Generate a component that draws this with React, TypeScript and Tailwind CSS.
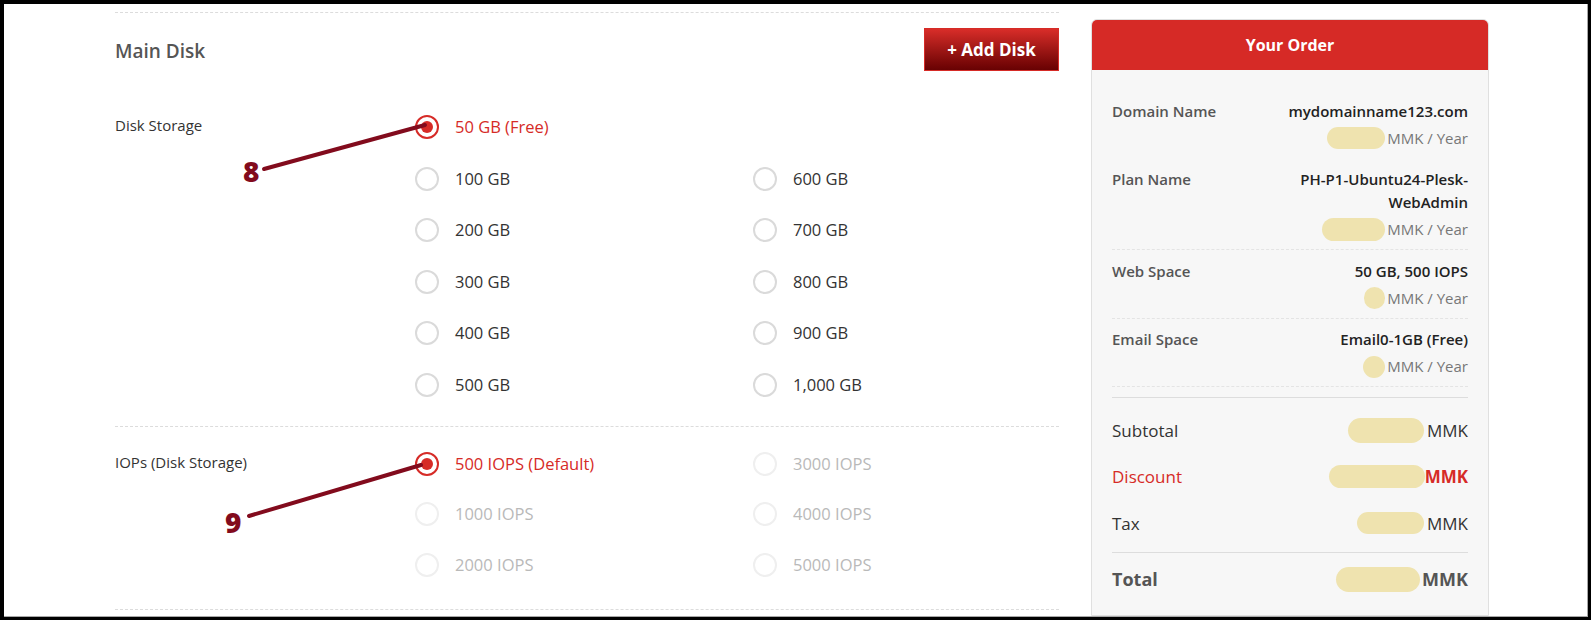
import React from "react";

type Opt = { label: string; state: "checked" | "idle" | "disabled" };

function Radio({ state }: { state: Opt["state"] }) {
  if (state === "checked") {
    return (
      <span className="flex h-6 w-6 shrink-0 items-center justify-center rounded-full border-2 border-[#d62b27] bg-white">
        <span className="h-3 w-3 rounded-full bg-[#d62b27]" />
      </span>
    );
  }
  if (state === "disabled") {
    return <span className="h-6 w-6 shrink-0 rounded-full border-2 border-[#efefef] bg-white" />;
  }
  return <span className="h-6 w-6 shrink-0 rounded-full border-2 border-[#dadada] bg-white" />;
}

function Option({ opt }: { opt: Opt }) {
  const color =
    opt.state === "checked" ? "text-[#d62b27]" : opt.state === "disabled" ? "text-[#b9b9b9]" : "text-[#333]";
  return (
    <div className="flex h-6 items-center gap-4">
      <Radio state={opt.state} />
      <span className={`text-[16.5px] leading-6 ${color}`}>{opt.label}</span>
    </div>
  );
}

function OptionColumn({ items, rowH }: { items: (Opt | null)[]; rowH: string }) {
  return (
    <div className={`flex w-[338px] shrink-0 flex-col ${rowH}`}>
      {items.map((o, i) => (
        <div key={i} className="h-6">
          {o ? <Option opt={o} /> : null}
        </div>
      ))}
    </div>
  );
}

const diskCol1: Opt[] = [
  { label: "50 GB (Free)", state: "checked" },
  { label: "100 GB", state: "idle" },
  { label: "200 GB", state: "idle" },
  { label: "300 GB", state: "idle" },
  { label: "400 GB", state: "idle" },
  { label: "500 GB", state: "idle" },
];
const diskCol2: (Opt | null)[] = [
  null,
  { label: "600 GB", state: "idle" },
  { label: "700 GB", state: "idle" },
  { label: "800 GB", state: "idle" },
  { label: "900 GB", state: "idle" },
  { label: "1,000 GB", state: "idle" },
];
const iopsCol1: Opt[] = [
  { label: "500 IOPS (Default)", state: "checked" },
  { label: "1000 IOPS", state: "disabled" },
  { label: "2000 IOPS", state: "disabled" },
];
const iopsCol2: Opt[] = [
  { label: "3000 IOPS", state: "disabled" },
  { label: "4000 IOPS", state: "disabled" },
  { label: "5000 IOPS", state: "disabled" },
];

function Blob({ w, h = "h-[22px]" }: { w: string; h?: string }) {
  return <span className={`inline-block ${w} ${h} rounded-full bg-[#efe3af]`} />;
}

function OrderRow({
  label,
  value,
  blob,
  divided = true,
}: {
  label: string;
  value: React.ReactNode;
  blob: React.ReactNode;
  divided?: boolean;
}) {
  return (
    <div
      className={`flex justify-between pt-[9.5px] pb-[8px] ${
        divided ? "border-b border-dashed border-[#e4e4e4]" : "border-b border-transparent"
      }`}
    >
      <div className="text-[15px] font-semibold leading-[23px] text-[#555]">{label}</div>
      <div className="text-right">
        <div className="text-[15px] font-semibold leading-[23px] text-[#222]">{value}</div>
        <div className="mt-1 flex items-center justify-end text-[15px] leading-[23px] text-[#777]">
          {blob}
          <span className="ml-[2px]">MMK / Year</span>
        </div>
      </div>
    </div>
  );
}

function TotalLine({
  label,
  blob,
  red,
}: {
  label: string;
  blob: React.ReactNode;
  red?: boolean;
}) {
  return (
    <div className="flex h-[46.5px] items-center justify-between text-[17px]">
      <span className={red ? "text-[#d62b27]" : "text-[#333]"}>{label}</span>
      <span className="flex items-center">
        {blob}
        <span className={red ? "font-bold text-[#d62b27]" : "ml-[3px] text-[#333]"}>MMK</span>
      </span>
    </div>
  );
}

export default function App() {
  return (
    <div
      className="relative h-[620px] w-[1591px] overflow-hidden bg-black pt-1 pl-1 pr-[3px] pb-[3px]"
      style={{ fontFamily: '"Open Sans", "Noto Sans", sans-serif' }}
    >
      <div className="flex h-full overflow-hidden border-r border-b border-[#a8a8a8] bg-white pl-[111px]">
        {/* configuration column */}
        <div className="w-[944px] shrink-0 pt-2">
          <div className="border-t border-dashed border-[#dcdcdc]" />
          <div className="mt-[15px] flex items-center justify-between">
            <h2 className="pt-[3px] text-[19px] font-semibold text-[#555]">Main Disk</h2>
            <button className="h-[43px] w-[135px] border border-[#d62b27] bg-linear-to-b from-[#d92d29] to-[#680203] text-[17px] font-bold text-white">
              + Add Disk
            </button>
          </div>

          <div className="mt-[44px] flex">
            <div className="w-[300px] shrink-0 text-[15px] leading-[20px] text-[#333]">Disk Storage</div>
            <OptionColumn items={diskCol1} rowH="gap-[27.6px]" />
            <OptionColumn items={diskCol2} rowH="gap-[27.6px]" />
          </div>

          <div className="mt-[29px] border-t border-dashed border-[#dcdcdc]" />

          <div className="mt-[25px] flex">
            <div className="w-[300px] shrink-0 text-[15px] leading-[20px] text-[#333]">IOPs (Disk Storage)</div>
            <OptionColumn items={iopsCol1} rowH="gap-[26.5px]" />
            <OptionColumn items={iopsCol2} rowH="gap-[26.5px]" />
          </div>

          <div className="mt-[32px] border-t border-dashed border-[#dcdcdc]" />
        </div>

        {/* order summary */}
        <div className="ml-[32px] mt-[15px] flex w-[398px] shrink-0 flex-col rounded-t-[6px] border border-[#e0e0e0] bg-[#f7f7f7]">
          <div className="flex h-[50px] items-center justify-center rounded-t-[5px] bg-[#d62a26] text-[16px] font-bold text-white">
            Your Order
          </div>
          <div className="flex-1 px-5 pt-5">
            <OrderRow
              label="Domain Name"
              value="mydomainname123.com"
              divided={false}
              blob={<Blob w="w-[58px]" />}
            />
            <OrderRow
              label="Plan Name"
              value={
                <>
                  PH-P1-Ubuntu24-Plesk-
                  <br />
                  WebAdmin
                </>
              }
              blob={<Blob w="w-[63px]" h="h-[23px]" />}
            />
            <OrderRow label="Web Space" value="50 GB, 500 IOPS" blob={<Blob w="w-[21px]" />} />
            <OrderRow label="Email Space" value="Email0-1GB (Free)" blob={<Blob w="w-[22px]" />} />

            <div className="mt-[10px] border-t border-[#dddddd] pt-[9px] pb-[5px]">
              <TotalLine label="Subtotal" blob={<Blob w="w-[76px]" h="h-[25px]" />} />
              <TotalLine label="Discount" red blob={<Blob w="w-[96px]" h="h-[23px]" />} />
              <TotalLine label="Tax" blob={<Blob w="w-[67px]" />} />
            </div>
            <div className="flex items-center justify-between border-t border-[#dddddd] pt-[13px] text-[18px] font-bold leading-[27px] text-[#555]">
              <span>Total</span>
              <span className="flex items-center">
                <Blob w="w-[84px]" h="h-[25px]" />
                <span className="ml-[2px]">MMK</span>
              </span>
            </div>
          </div>
        </div>
      </div>

      {/* numbered callouts */}
      <svg
        className="pointer-events-none absolute top-0 left-0"
        width="1591"
        height="620"
        viewBox="0 0 1591 620"
      >
        <line x1="264" y1="169" x2="425" y2="125" stroke="#820b1d" strokeWidth="4" strokeLinecap="round" />
        <text x="243" y="182" fill="#820b1d" fontSize="28" fontWeight="800" fontFamily="Open Sans, sans-serif">
          8
        </text>
        <line x1="249" y1="516" x2="421" y2="465" stroke="#820b1d" strokeWidth="4" strokeLinecap="round" />
        <text x="225" y="533" fill="#820b1d" fontSize="28" fontWeight="800" fontFamily="Open Sans, sans-serif">
          9
        </text>
      </svg>
    </div>
  );
}
